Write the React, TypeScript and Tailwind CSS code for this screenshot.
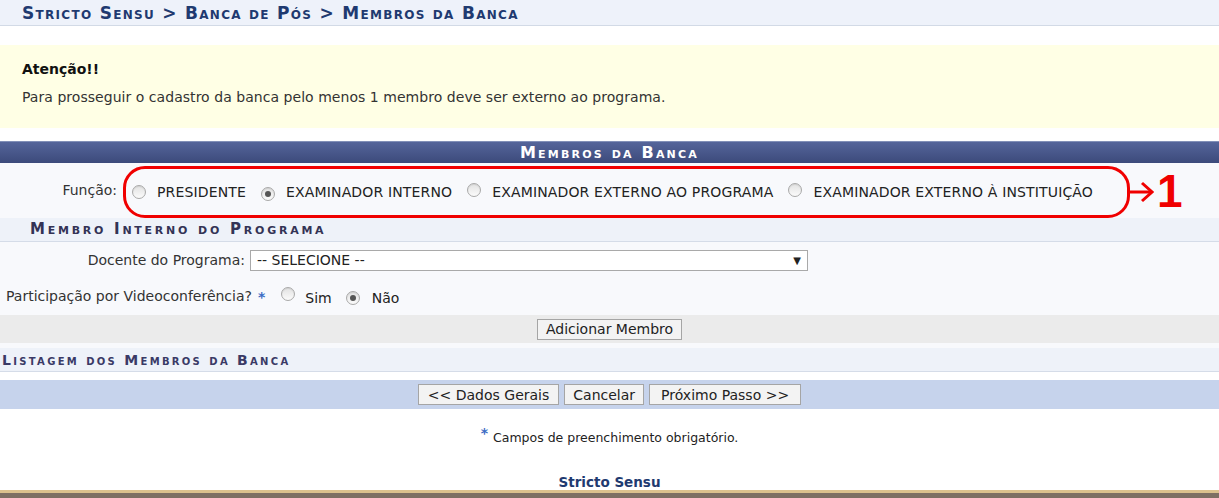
import React from "react";

const font = { fontFamily: '"DejaVu Sans", Verdana, sans-serif' };

function Radio({ checked = false }: { checked?: boolean }) {
  return (
    <span className="inline-flex h-[14px] w-[14px] shrink-0 items-center justify-center rounded-full border border-[#a9a9a9] bg-gradient-to-b from-[#e2e2e2] to-[#fbfbfb] shadow-[inset_0_1px_1px_rgba(0,0,0,0.08)]">
      {checked && <span className="h-[6px] w-[6px] rounded-full bg-[#555]" />}
    </span>
  );
}

function Star() {
  return <span className="text-[14px] font-bold leading-none text-[#3b6cc4]">*</span>;
}

function Btn({ children, className = "px-[7px]" }: { children: React.ReactNode; className?: string }) {
  return (
    <button className={`h-[21px] border border-[#a5a5a5] bg-[#f3f3f3] text-[14px] leading-none text-[#222] ${className}`}>
      {children}
    </button>
  );
}

export default function App() {
  return (
    <div className="relative w-[1219px] h-[498px] overflow-hidden bg-white text-[#222]" style={font}>
      {/* breadcrumb */}
      <div className="h-[26px] border-b border-[#d2dae6] bg-[#eef2fa] pl-[22px] pt-[2px]">
        <span className="text-[17px] font-bold leading-[20px] text-[#1f3a70] [font-variant:small-caps] tracking-[1.3px]">
          Stricto Sensu &gt; Banca de Pós &gt; Membros da Banca
        </span>
      </div>

      <div className="h-[19px]" />

      {/* warning */}
      <div className="h-[83px] bg-[#ffffe5] pl-[22px] pt-[15px] text-[14px]">
        <p className="font-bold leading-[18px] text-[#111]">Atenção!!</p>
        <p className="mt-[10px] leading-[18px] tracking-[0.04px] text-[#333]">
          Para prosseguir o cadastro da banca pelo menos 1 membro deve ser externo ao programa.
        </p>
      </div>

      <div className="h-[13px]" />

      {/* table header */}
      <div className="flex h-[22px] items-center justify-center border-t border-[#8290b8] bg-gradient-to-b from-[#55659a] to-[#3c4a7b]">
        <span className="pt-[1px] text-[16px] font-bold leading-none tracking-[2.2px] text-white [font-variant:small-caps]">
          Membros da Banca
        </span>
      </div>

      <div className="bg-[#f8f9fc]">
        {/* função */}
        <div className="relative flex h-[55px] items-center text-[14px]">
          <span className="w-[119px] pr-[2px] text-right text-[#333]">Função:</span>
          <div className="ml-[13px] mt-[3px] flex items-center tracking-[0.15px]">
            <Radio />
            <span className="ml-[11px] text-[#222]">PRESIDENTE</span>
            <span className="ml-[15px]"><Radio checked /></span>
            <span className="ml-[11px] text-[#222]">EXAMINADOR INTERNO</span>
            <span className="ml-[15px]"><Radio /></span>
            <span className="ml-[11px] text-[#222]">EXAMINADOR EXTERNO AO PROGRAMA</span>
            <span className="ml-[15px]"><Radio /></span>
            <span className="ml-[11px] text-[#222]">EXAMINADOR EXTERNO À INSTITUIÇÃO</span>
          </div>

          {/* annotation */}
          <div className="pointer-events-none absolute left-[123px] top-[3px] h-[52px] w-[1007px] rounded-[22px] border-[3px] border-[#f00000]" />
          <svg className="pointer-events-none absolute left-[1128px] top-[17px]" width="26" height="24" viewBox="0 0 26 24">
            <path d="M0 12 H23" stroke="#f00000" strokeWidth="3" fill="none" />
            <path d="M14 3 L24 12 L14 21" stroke="#f00000" strokeWidth="3" fill="none" />
          </svg>
          <span className="pointer-events-none absolute left-[1157px] top-[5px] text-[46px] font-bold leading-none text-[#f00000]" style={{ fontFamily: '"Liberation Sans", Arial, sans-serif' }}>
            1
          </span>
        </div>

        {/* membro interno subheader */}
        <div className="flex h-[24px] items-center border-b border-[#d5dce8] bg-[#eef2f9] pl-[30px]">
          <span className="text-[15px] font-bold leading-none tracking-[2.75px] text-[#333355] [font-variant:small-caps]">
            Membro Interno do Programa
          </span>
        </div>

        {/* docente */}
        <div className="flex h-[36px] items-center text-[14px]">
          <span className="w-[247px] pr-[2px] text-right text-[#333]">Docente do Programa:</span>
          <div className="ml-[3px] flex h-[21px] w-[558px] items-center justify-between border border-[#a9a9a9] bg-white pl-[6px] pr-[6px]">
            <span className="text-[#222]">-- SELECIONE --</span>
            <span className="text-[10px] text-[#222]">▼</span>
          </div>
        </div>

        {/* videoconferencia */}
        <div className="flex h-[37px] items-center text-[14px]">
          <span className="ml-[6px] text-[#333]">Participação por Videoconferência?</span>
          <span className="ml-[6px] mt-[2px]"><Star /></span>
          <span className="ml-[16px]"><Radio /></span>
          <span className="ml-[10px] mt-[4px] text-[#222]">Sim</span>
          <span className="ml-[14px]"><Radio checked /></span>
          <span className="ml-[12px] mt-[4px] text-[#222]">Não</span>
        </div>
      </div>

      {/* add member bar */}
      <div className="flex h-[28px] items-center justify-center bg-[#ebebeb]">
        <Btn className="px-[8px]">Adicionar Membro</Btn>
      </div>

      <div className="h-[5px] bg-[#f8f9fc]" />

      {/* listagem subheader */}
      <div className="flex h-[24px] items-center border-b border-[#d5dce8] bg-[#eef2f9] pl-[2px]">
        <span className="text-[14px] font-bold leading-none tracking-[2.3px] text-[#3a3a66] [font-variant:small-caps]">
          Listagem dos Membros da Banca
        </span>
      </div>

      <div className="h-[8px]" />

      {/* button bar */}
      <div className="flex h-[29px] items-center justify-center gap-[5px] bg-[#c6d3ec]">
        <Btn className="px-[9px]">&lt;&lt; Dados Gerais</Btn>
        <Btn className="px-[8px]">Cancelar</Btn>
        <Btn className="px-[11px]">Próximo Passo &gt;&gt;</Btn>
      </div>

      {/* required note */}
      <div className="mt-[17px] flex items-start justify-center text-[12.5px] text-[#222]">
        <Star />
        <span className="ml-[5px] mt-[3px]">Campos de preenchimento obrigatório.</span>
      </div>

      {/* footer */}
      <div className="absolute bottom-0 left-0 right-0">
        <div className="text-center text-[13.5px] font-bold leading-[16px] text-[#1f3a70]">Stricto Sensu</div>
        <div className="h-[3px] bg-[#dcc28e]" />
        <div className="h-[5px] bg-[#7e7064]" />
      </div>
    </div>
  );
}
